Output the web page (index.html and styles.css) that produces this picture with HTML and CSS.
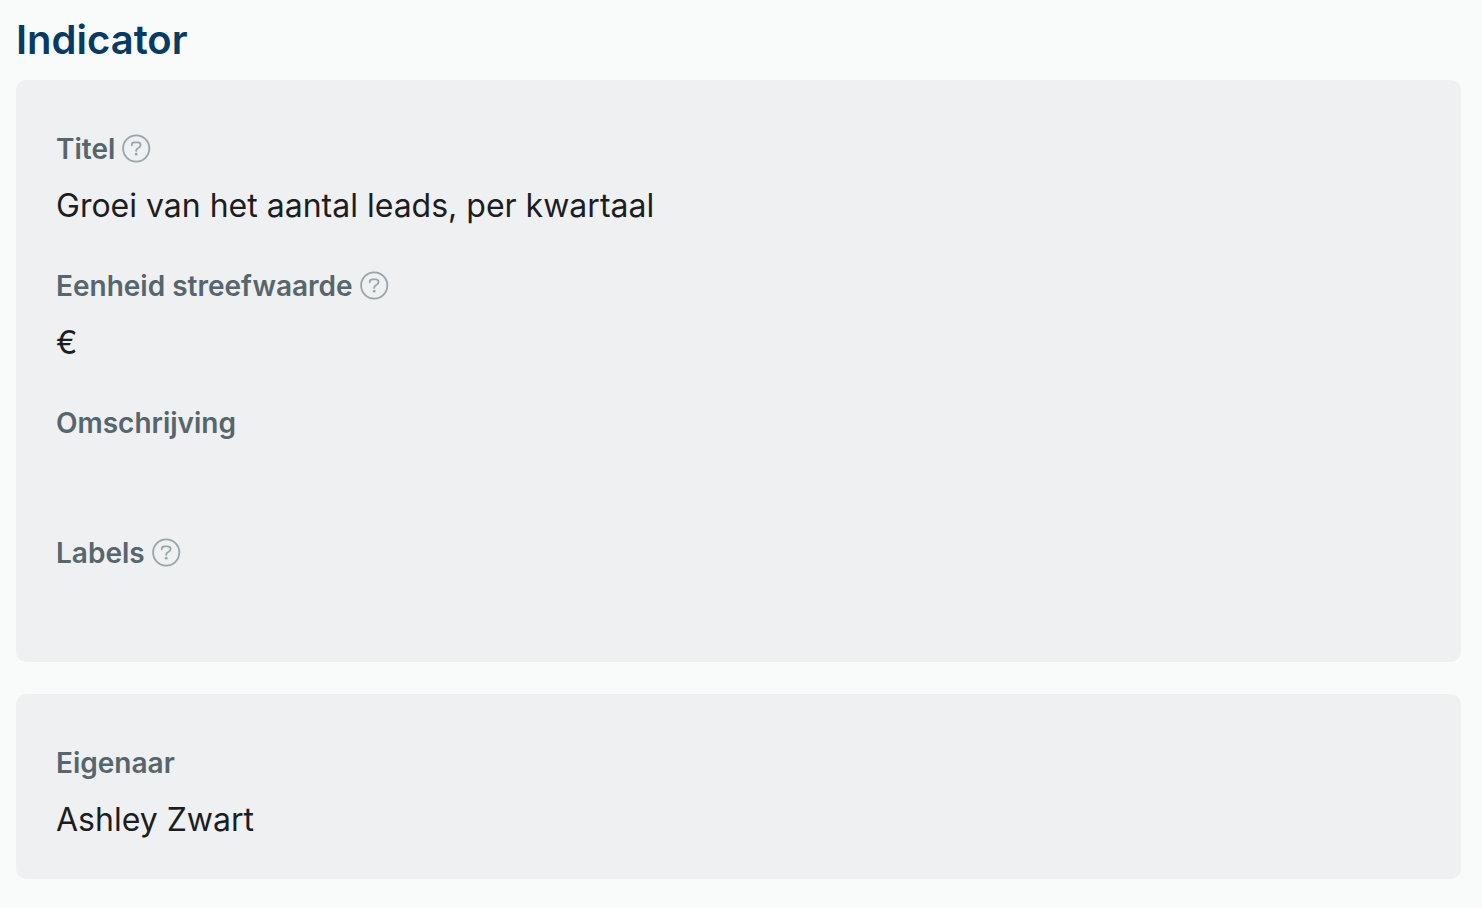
FILE: index.html
```
<!DOCTYPE html>
<html lang="nl">
<head>
    <meta charset="UTF-8">
    <meta name="viewport" content="width=device-width, initial-scale=1.0">
    <title>Indicator</title>
    <link rel="stylesheet" href="styles.css">
</head>
<body>
    <h1>Indicator</h1>

    <dl class="card">
        <div class="field">
            <dt>Titel
                <svg class="help" viewBox="0 0 28 28" aria-hidden="true">
                    <circle cx="14.2" cy="13.5" r="13.1"/>
                    <path d="M9.8 10.3V9.8C9.8 8.2 11 7.4 12.6 7.4h3C17.5 7.4 18.6 8.5 18.6 10c0 1.4-.7 2.1-1.9 2.7-1.6.7-2.5 1.2-2.5 2.8v.4"/>
                    <circle class="dot" cx="14.2" cy="19.2" r="1.4"/>
                </svg>
            </dt>
            <dd>Groei van het aantal leads, per kwartaal</dd>
        </div>
        <div class="field">
            <dt>Eenheid streefwaarde
                <svg class="help" viewBox="0 0 28 28" aria-hidden="true">
                    <circle cx="14.2" cy="13.5" r="13.1"/>
                    <path d="M9.8 10.3V9.8C9.8 8.2 11 7.4 12.6 7.4h3C17.5 7.4 18.6 8.5 18.6 10c0 1.4-.7 2.1-1.9 2.7-1.6.7-2.5 1.2-2.5 2.8v.4"/>
                    <circle class="dot" cx="14.2" cy="19.2" r="1.4"/>
                </svg>
            </dt>
            <dd>€</dd>
        </div>
        <div class="field">
            <dt>Omschrijving</dt>
            <dd class="empty"></dd>
        </div>
        <div class="field">
            <dt>Labels
                <svg class="help" viewBox="0 0 28 28" aria-hidden="true">
                    <circle cx="14.2" cy="13.5" r="13.1"/>
                    <path d="M9.8 10.3V9.8C9.8 8.2 11 7.4 12.6 7.4h3C17.5 7.4 18.6 8.5 18.6 10c0 1.4-.7 2.1-1.9 2.7-1.6.7-2.5 1.2-2.5 2.8v.4"/>
                    <circle class="dot" cx="14.2" cy="19.2" r="1.4"/>
                </svg>
            </dt>
            <dd class="empty"></dd>
        </div>
    </dl>

    <dl class="card">
        <div class="field">
            <dt>Eigenaar</dt>
            <dd>Ashley Zwart</dd>
        </div>
    </dl>
</body>
</html>
```

FILE: styles.css
```
body {
    margin: 0;
    padding: 16px 21px 29px 16px;
    background: #f9fbfa;
    color: #1c1d1f;
    font-family: Inter, sans-serif;
}

h1 {
    margin: 0 0 16px;
    color: #073b63;
    font-size: 40px;
    font-weight: 600;
    line-height: 48px;
}

.card {
    display: flex;
    flex-direction: column;
    gap: 36px;
    margin: 0 0 32px;
    padding: 49px 40px 35px;
    border-radius: 10px;
    background: #eff0f2;
}

.card:last-child {
    margin-bottom: 0;
}

dt {
    display: flex;
    align-items: center;
    gap: 7px;
    color: #57656d;
    font-size: 28px;
    font-weight: 600;
    line-height: 40px;
}

dd {
    margin: 12px 0 0;
    font-size: 32px;
    line-height: 49px;
}

.empty {
    height: 42px;
}

.help {
    width: 28px;
    height: 28px;
    overflow: visible;
    fill: none;
    stroke: #98a5ab;
    stroke-width: 1.8;
    stroke-linecap: round;
}

.help .dot {
    fill: #98a5ab;
    stroke: none;
}
```
